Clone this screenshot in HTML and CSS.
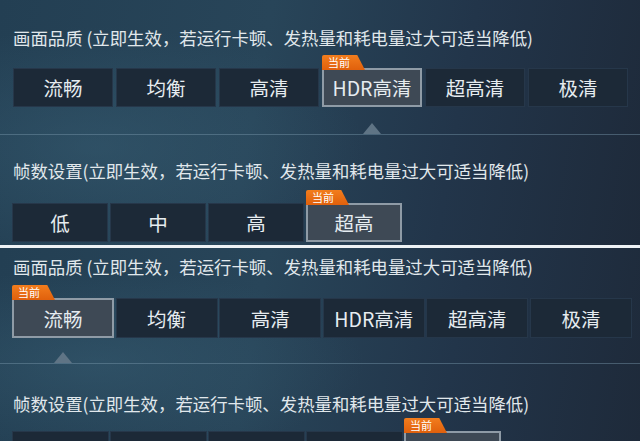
FILE: index.html
```html
<!DOCTYPE html>
<html lang="zh-CN">
<head>
  <meta charset="UTF-8">
  <meta name="viewport" content="width=device-width, initial-scale=1.0">
  <title>画质设置</title>
  <link rel="stylesheet" href="styles.css">
</head>
<body>
  <div class="panel panel-a">
    <p class="title">画面品质 (立即生效，若运行卡顿、发热量和耗电量过大可适当降低)</p>
    <div class="options quality">
      <div class="opt">流畅</div>
      <div class="opt">均衡</div>
      <div class="opt">高清</div>
      <div class="opt current"><span class="badge">当前</span>HDR高清</div>
      <div class="opt">超高清</div>
      <div class="opt">极清</div>
    </div>
    <div class="pointer quality"><span class="arrow col-4"></span></div>
    <p class="title title-fps">帧数设置(立即生效，若运行卡顿、发热量和耗电量过大可适当降低)</p>
    <div class="options fps">
      <div class="opt">低</div>
      <div class="opt">中</div>
      <div class="opt">高</div>
      <div class="opt current"><span class="badge">当前</span>超高</div>
    </div>
  </div>

  <div class="panel panel-b">
    <p class="title">画面品质 (立即生效，若运行卡顿、发热量和耗电量过大可适当降低)</p>
    <div class="options quality">
      <div class="opt current"><span class="badge">当前</span>流畅</div>
      <div class="opt">均衡</div>
      <div class="opt">高清</div>
      <div class="opt">HDR高清</div>
      <div class="opt">超高清</div>
      <div class="opt">极清</div>
    </div>
    <div class="pointer quality"><span class="arrow col-1"></span></div>
    <p class="title title-fps">帧数设置(立即生效，若运行卡顿、发热量和耗电量过大可适当降低)</p>
    <div class="options fps">
      <div class="opt">低</div>
      <div class="opt">中</div>
      <div class="opt">高</div>
      <div class="opt">超高</div>
      <div class="opt current"><span class="badge">当前</span>极高</div>
    </div>
  </div>
</body>
</html>
```

FILE: styles.css
```css
body, html {
  margin: 0;
  padding: 0;
  width: 640px;
  height: 441px;
  overflow: hidden;
  background: #eef2f5;
  font-family: "Noto Sans CJK SC", "Noto Sans", sans-serif;
}
body {
  display: flex;
  flex-direction: column;
  gap: 3px;
}
.panel {
  flex: none;
  overflow: hidden;
  background:
    radial-gradient(ellipse 60% 70% at 15% 60%, rgba(58, 98, 120, 0.45), transparent 70%),
    linear-gradient(100deg, #233f53 0%, #284559 40%, #22354a 70%, #1e2a3a 100%);
}
.panel-a {
  height: 245px;
  padding-top: 28px;
  box-sizing: border-box;
}
.panel-b {
  flex: 1;
  padding-top: 9px;
  box-sizing: border-box;
}
.title {
  margin: 0;
  padding-left: 13px;
  font-size: 17.4px;
  line-height: 20px;
  color: #e1e8ec;
  white-space: nowrap;
}

/* option rows */
.options, .pointer {
  display: grid;
  margin-left: 13px;
}
.options.quality, .pointer.quality {
  grid-template-columns: repeat(6, 100px);
  column-gap: 3px;
}
.options.fps {
  grid-template-columns: repeat(4, 96px);
  column-gap: 2px;
  margin-left: 12px;
}
.opt {
  position: relative;
  height: 39px;
  box-sizing: border-box;
  display: flex;
  align-items: center;
  justify-content: center;
  background: #1c2937;
  border: 1px solid #26374a;
  color: #e6ecf0;
  font-size: 19.5px;
}
.opt.current {
  background: #3e4955;
  border: 2px solid #8f9ba6;
}
.badge {
  position: absolute;
  left: -2px;
  bottom: 100%;
  width: 43px;
  height: 15px;
  padding-left: 6px;
  box-sizing: border-box;
  background: linear-gradient(#f27d1d, #e0600c);
  clip-path: polygon(0 0, 82% 0, 100% 100%, 0 100%);
  border-radius: 2px 0 0 0;
  color: #fff;
  font-size: 11px;
  line-height: 15px;
}

/* selection arrow and rule */
.pointer {
  margin-left: 0;
  padding-left: 13px;
  height: 12px;
  border-bottom: 1px solid rgba(120, 150, 170, 0.45);
  box-sizing: border-box;
}
.arrow {
  justify-self: center;
  align-self: end;
  width: 0;
  height: 0;
  border-left: 9px solid transparent;
  border-right: 9px solid transparent;
  border-bottom: 11px solid #5f7485;
}
.col-1 { grid-column: 1; }
.col-4 { grid-column: 4; }

/* top panel spacing */
.panel-a .options.quality { margin-top: 20px; }
.panel-a .pointer { margin-top: 16px; }
.panel-a .title-fps { margin-top: 26px; }
.panel-a .options.fps { margin-top: 22px; }

/* bottom panel spacing */
.panel-b .options.quality {
  margin-top: 21px;
  margin-left: 12px;
  grid-template-columns: repeat(6, 102px);
  column-gap: 1.6px;
}
.panel-b .options.quality .opt { height: 40px; }
.panel-b .pointer {
  margin-top: 14px;
  padding-left: 12px;
  grid-template-columns: repeat(6, 102px);
  column-gap: 1.6px;
}
.panel-b .title-fps { margin-top: 30px; }
.panel-b .options.fps {
  margin-top: 17px;
  grid-template-columns: repeat(5, 97px);
  column-gap: 1px;
}
```
